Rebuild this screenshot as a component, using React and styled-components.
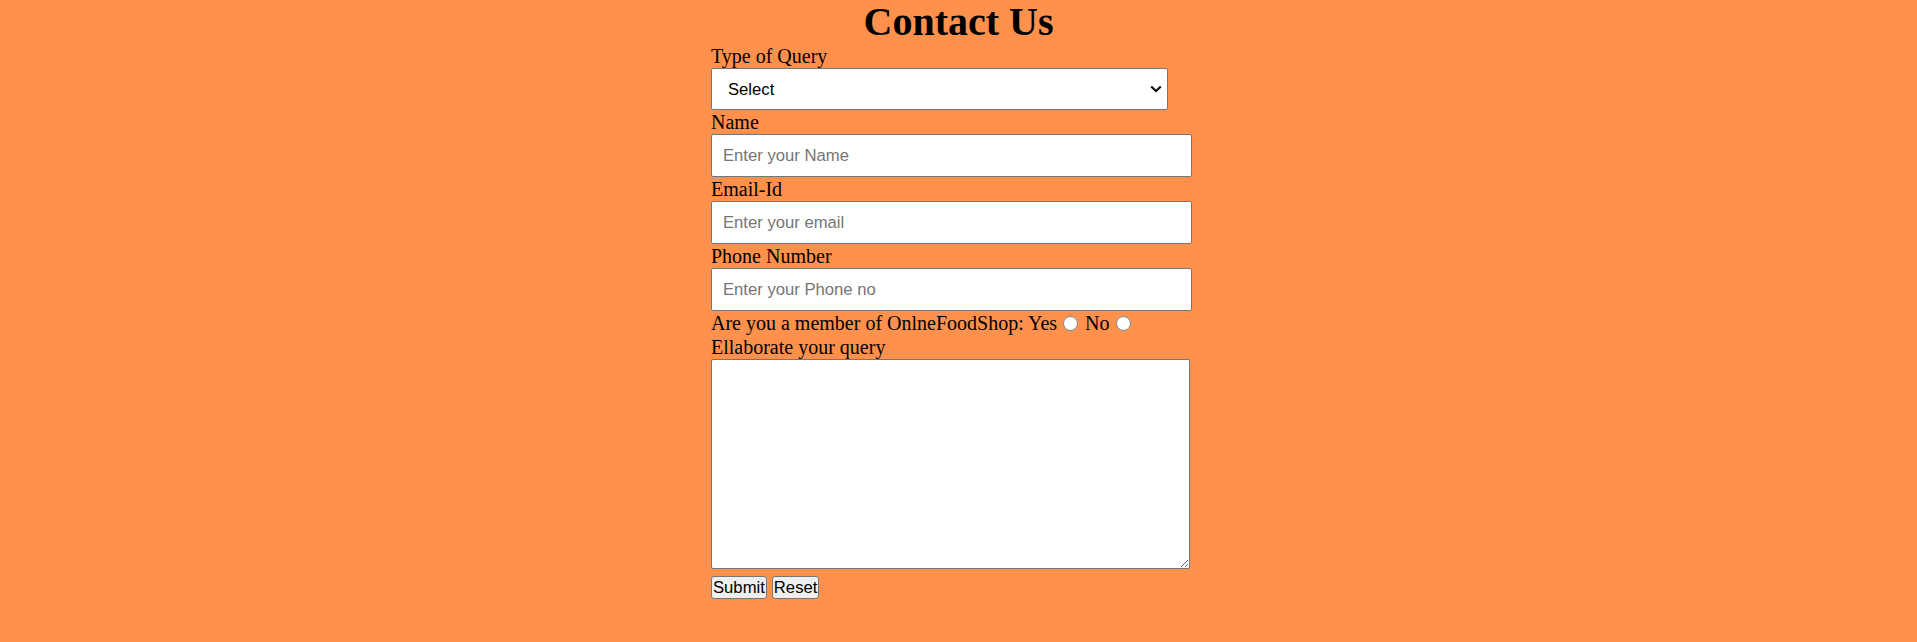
import styled, { createGlobalStyle } from "styled-components"

const GlobalStyle = createGlobalStyle`
  html, body {
    margin: 0;
    padding: 0;
    background: #ff914d;
  }
  body {
    font-family: "Liberation Serif", "Times New Roman", serif;
    font-size: 20px;
    color: #000;
  }
`

const fieldFont = `
  font-family: "Liberation Sans", Arial, sans-serif;
  font-size: 16.67px;
  color: #000;
`

export default function App() {
  return (
    <ContactView>
      <GlobalStyle />
      <div className="wrapper">
        <Title>Contact Us</Title>
        <form onSubmit={(e) => e.preventDefault()}>
          <Label htmlFor="query-type">Type of Query</Label>
          <SelectBox>
            <Select id="query-type" defaultValue="">
              <option value="">Select</option>
              <option value="order">Order</option>
              <option value="delivery">Delivery</option>
              <option value="payment">Payment</option>
              <option value="other">Other</option>
            </Select>
            <Chevron width="12" height="8" viewBox="0 0 12 8">
              <path d="M1.2 1.5 L6 6 L10.8 1.5" fill="none" stroke="#111" strokeWidth="2.2" />
            </Chevron>
          </SelectBox>

          <Label htmlFor="name">Name</Label>
          <Input id="name" type="text" placeholder="Enter your Name" />

          <Label htmlFor="email">Email-Id</Label>
          <Input id="email" type="email" placeholder="Enter your email" />

          <Label htmlFor="phone">Phone Number</Label>
          <Input id="phone" type="tel" placeholder="Enter your Phone no" />

          <RadioRow>
            Are you a member of OnlneFoodShop: Yes<Radio type="radio" name="member" value="yes" /> No<Radio type="radio" name="member" value="no" />
          </RadioRow>

          <Label htmlFor="query">Ellaborate your query</Label>
          <TextArea id="query" />

          <Buttons>
            <Button type="submit">Submit</Button>
            <Button type="reset">Reset</Button>
          </Buttons>
        </form>
      </div>
    </ContactView>
  )
}

const ContactView = styled.div`
  min-height: 100vh;
  background: #ff914d;
  .wrapper {
    width: 495px;
    margin: 0 auto;
  }
  form {
    display: flex;
    flex-direction: column;
    align-items: flex-start;
  }
`

const Title = styled.h1`
  margin: 0;
  font-size: 40px;
  font-weight: bold;
  line-height: 44px;
  text-align: center;
`

const Label = styled.label`
  display: block;
  line-height: 24px;
`

const SelectBox = styled.div`
  position: relative;
  width: 457px;
  height: 42px;
`

const Select = styled.select`
  ${fieldFont}
  appearance: none;
  box-sizing: border-box;
  width: 100%;
  height: 100%;
  margin: 0;
  padding: 0 30px 0 16px;
  background: #fff;
  border: 1px solid #767676;
  border-radius: 2px;
`

const Chevron = styled.svg`
  position: absolute;
  right: 6px;
  top: 17px;
  pointer-events: none;
`

const Input = styled.input`
  ${fieldFont}
  box-sizing: border-box;
  width: 481px;
  height: 43px;
  margin: 0;
  padding: 0 11px;
  background: #fff;
  border: 1px solid #767676;
  border-radius: 2px;
  &::placeholder {
    color: #757575;
  }
`

const RadioRow = styled.div`
  line-height: 24px;
  height: 24px;
  white-space: nowrap;
`

const Radio = styled.input`
  width: 15px;
  height: 15px;
  margin: 3px 2px 0 6px;
  vertical-align: -1px;
`

const TextArea = styled.textarea`
  ${fieldFont}
  box-sizing: border-box;
  width: 479px;
  height: 210px;
  margin: 0;
  background: #fff;
  border: 1px solid #767676;
  border-radius: 2px;
`

const Buttons = styled.div`
  display: flex;
  gap: 5px;
  margin-top: 7px;
`

const Button = styled.button`
  ${fieldFont}
  height: 23px;
  padding: 0 1px;
  background: #efefef;
  border: 1px solid #767676;
  border-radius: 3px;
`
